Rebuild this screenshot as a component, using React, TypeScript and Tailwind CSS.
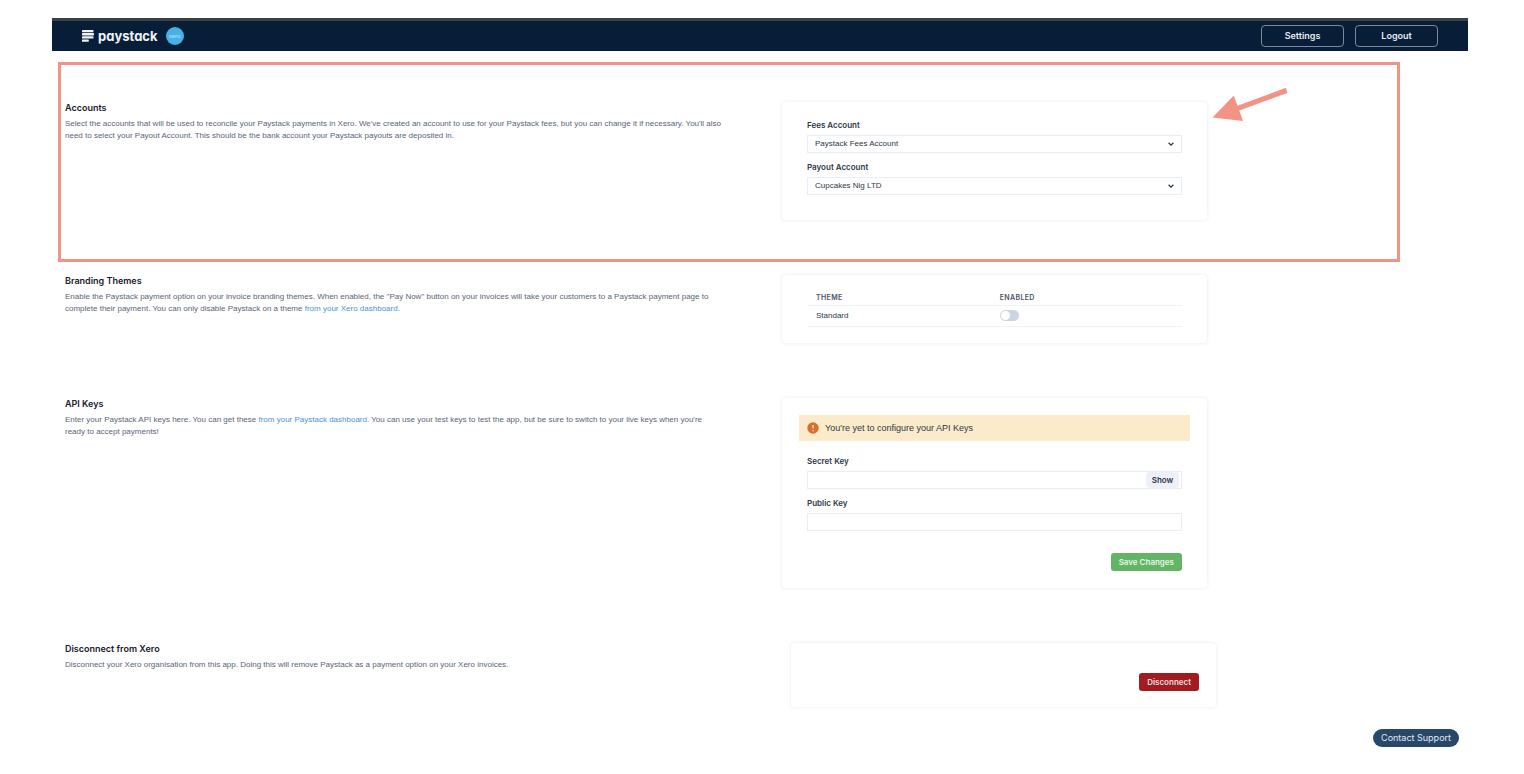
import { useState } from "react";
import type { ReactNode } from "react";

const cardClass = "rounded bg-white shadow-[0_0_4px_rgba(0,0,0,0.09)]";
const labelClass = "block font-['Inter',sans-serif] text-[8px] leading-[12px] font-semibold text-[#2d3748]";
const inputClass =
  "mt-1 block h-[18px] w-full border border-[#e9edf4] bg-white px-[7px] text-[8px] leading-[12px] text-[#2d3748] outline-none";
const actionClass = "h-[18px] rounded-[3px] px-2 font-['Inter',sans-serif] text-[8px] leading-[12px] font-semibold";
const linkClass = "text-[#4a93dc]";

function PaystackMark() {
  return (
    <svg className="h-3 w-3" viewBox="0 0 12 12" fill="#f1f3f5" aria-hidden="true">
      <rect x="0" y="0" width="11.4" height="2.3" rx="0.4" />
      <rect x="0" y="3.1" width="12" height="2.3" rx="0.4" />
      <rect x="0" y="6.3" width="11.4" height="2.3" rx="0.4" />
      <rect x="0" y="9.5" width="6.8" height="2.3" rx="0.4" />
    </svg>
  );
}

function Header() {
  const button =
    "h-[22px] w-[83px] rounded border border-[#7d8899] font-['Inter',sans-serif] text-[9px] leading-[12px] font-semibold text-[#e8ebf0]";
  return (
    <header className="flex h-[33px] items-center justify-between border-t-[3px] border-[#3a4143] bg-[#081e38] px-[30px]">
      <div className="flex items-center">
        <PaystackMark />
        <span className="ml-1 font-['Inter',sans-serif] text-[13px] leading-[18px] font-bold text-[#f1f3f5] [font-feature-settings:'cv11']">
          paystack
        </span>
        <span className="ml-2 flex h-[18px] w-[18px] items-center justify-center rounded-full bg-[#47b0e4] text-[6px] leading-[8px] text-[#c4e6f7]">
          xero
        </span>
      </div>
      <nav className="flex gap-[11px]">
        <button type="button" className={button}>Settings</button>
        <button type="button" className={button}>Logout</button>
      </nav>
    </header>
  );
}

function Intro({ title, children }: { title: string; children: ReactNode }) {
  return (
    <div className="pr-[59px]">
      <h2 className="font-['Inter',sans-serif] text-[9px] leading-[12px] font-semibold text-[#1a202c]">{title}</h2>
      <p className="mt-1 text-[8px] leading-[12px] text-[#5a6577]">{children}</p>
    </div>
  );
}

function AccountSelect({ id, label, option }: { id: string; label: string; option: string }) {
  return (
    <div>
      <label htmlFor={id} className={labelClass}>{label}</label>
      <div className="relative">
        <select id={id} className={`${inputClass} appearance-none`}>
          <option>{option}</option>
        </select>
        <svg
          className="pointer-events-none absolute top-[6px] right-2 h-[6px] w-[6px]"
          viewBox="0 0 6 6"
          fill="none"
          stroke="#2d3748"
          strokeWidth="1.3"
          aria-hidden="true"
        >
          <path d="M0.6 1.8 3 4.1 5.4 1.8" />
        </svg>
      </div>
    </div>
  );
}

function Highlight() {
  return (
    <>
      <div className="pointer-events-none absolute -top-10 right-[55px] -bottom-[42px] -left-[7px] border-[3px] border-[#f39386]" />
      <svg
        className="pointer-events-none absolute -top-[15px] right-[167px] h-[36px] w-[76px]"
        viewBox="0 0 76 36"
        fill="#f39386"
        aria-hidden="true"
      >
        <path d="M0.500 30.500 21.800 8.500 25.500 18.700 74 0.800 75.200 5.900 27.300 23.500 31 34Z" />
      </svg>
    </>
  );
}

export default function App() {
  const [enabled, setEnabled] = useState(false);
  const [shown, setShown] = useState(false);
  const row = "relative grid grid-cols-[717fr_425fr_248fr] items-start";

  return (
    <div className="min-h-screen bg-white pt-[18px] pr-14 pb-6 pl-[52px] font-['Liberation_Sans',sans-serif]">
      <Header />
      <main className="flex flex-col gap-[55px] px-[13px] pt-[51px]">
        <section className={row}>
          <Intro title="Accounts">
            Select the accounts that will be used to reconcile your Paystack payments in Xero. We've created an
            account to use for your Paystack fees, but you can change it if necessary. You'll also need to select
            your Payout Account. This should be the bank account your Paystack payouts are deposited in.
          </Intro>
          <div className={`${cardClass} flex flex-col gap-2 px-[25px] pt-[17px] pb-[25px]`}>
            <AccountSelect id="fees" label="Fees Account" option="Paystack Fees Account" />
            <AccountSelect id="payout" label="Payout Account" option="Cupcakes Nig LTD" />
          </div>
          <Highlight />
        </section>

        <section className={row}>
          <Intro title="Branding Themes">
            Enable the Paystack payment option on your invoice branding themes. When enabled, the "Pay Now" button
            on your invoices will take your customers to a Paystack payment page to complete their payment. You can
            only disable Paystack on a theme <a href="#xero" className={linkClass}>from your Xero dashboard.</a>
          </Intro>
          <div className={`${cardClass} px-[25px] pt-[17px] pb-4`}>
            <table className="w-full table-fixed text-left text-[8px] leading-[12px] text-[#2d3748]">
              <thead className="font-['Inter',sans-serif] text-[7px] tracking-wider text-[#4a5568]">
                <tr className="h-[13px] border-b border-[#f1f3f6]">
                  <th className="w-[49%] px-[9px] font-semibold">THEME</th>
                  <th className="px-[9px] font-semibold">ENABLED</th>
                </tr>
              </thead>
              <tbody>
                <tr className="h-[21px] border-b border-[#f1f3f6]">
                  <td className="px-[9px]">Standard</td>
                  <td className="px-[9px]">
                    <label className="flex h-[11px] w-[19px] cursor-pointer rounded-full bg-[#cbd5e0] p-px has-checked:justify-end has-checked:bg-[#61b565]">
                      <input
                        type="checkbox"
                        aria-label="Enable Standard"
                        className="sr-only"
                        checked={enabled}
                        onChange={(e) => setEnabled(e.target.checked)}
                      />
                      <span className="h-[9px] w-[9px] rounded-full bg-white" />
                    </label>
                  </td>
                </tr>
              </tbody>
            </table>
          </div>
        </section>

        <section className={row}>
          <Intro title="API Keys">
            Enter your Paystack API keys here. You can get these{" "}
            <a href="#paystack" className={linkClass}>from your Paystack dashboard.</a> You can use your test keys
            to test the app, but be sure to switch to your live keys when you're ready to accept payments!
          </Intro>
          <form className={`${cardClass} px-[25px] py-[17px]`} onSubmit={(e) => e.preventDefault()}>
            <div className="-mx-2 flex h-[26px] items-center gap-[6px] bg-[#fcebcb] px-2 text-[9px] leading-[12px] text-[#2d3748]">
              <svg className="h-3 w-3" viewBox="0 0 12 12" aria-hidden="true">
                <circle cx="6" cy="6" r="5.700" fill="#d57034" />
                <path d="M6 3v3.500M6 8v1.200" stroke="#fcebcb" strokeWidth="1.200" />
              </svg>
              You're yet to configure your API Keys
            </div>
            <div className="mt-[14px]">
              <label htmlFor="secret" className={labelClass}>Secret Key</label>
              <div className="relative">
                <input id="secret" type={shown ? "text" : "password"} className={inputClass} />
                <button
                  type="button"
                  onClick={() => setShown(!shown)}
                  className="absolute top-px right-[3px] h-4 w-[33px] rounded bg-[#edf1f7] font-['Inter',sans-serif] text-[8px] leading-[12px] font-semibold text-[#2d3748]"
                >
                  Show
                </button>
              </div>
            </div>
            <div className="mt-2">
              <label htmlFor="public" className={labelClass}>Public Key</label>
              <input id="public" type="text" className={inputClass} />
            </div>
            <div className="mt-[22px] flex justify-end">
              <button type="submit" className={`${actionClass} bg-[#61b565] text-[#e6f4e7]`}>Save Changes</button>
            </div>
          </form>
        </section>

        <section className="grid grid-cols-[726fr_425fr_239fr] items-start">
          <Intro title="Disconnect from Xero">
            Disconnect your Xero organisation from this app. Doing this will remove Paystack as a payment option on
            your Xero invoices.
          </Intro>
          <div className={`${cardClass} flex justify-end px-[17px] pt-[30px] pb-4`}>
            <button type="button" className={`${actionClass} bg-[#a01c21] text-[#f3dcdd]`}>Disconnect</button>
          </div>
        </section>
      </main>
      <div className="mt-[22px] flex justify-end pr-[9px]">
        <button type="button" className="h-[18px] rounded-full bg-[#27486a] px-2 font-['Inter',sans-serif] text-[9px] leading-[12px] text-[#e4eaf0]">
          Contact Support
        </button>
      </div>
    </div>
  );
}
